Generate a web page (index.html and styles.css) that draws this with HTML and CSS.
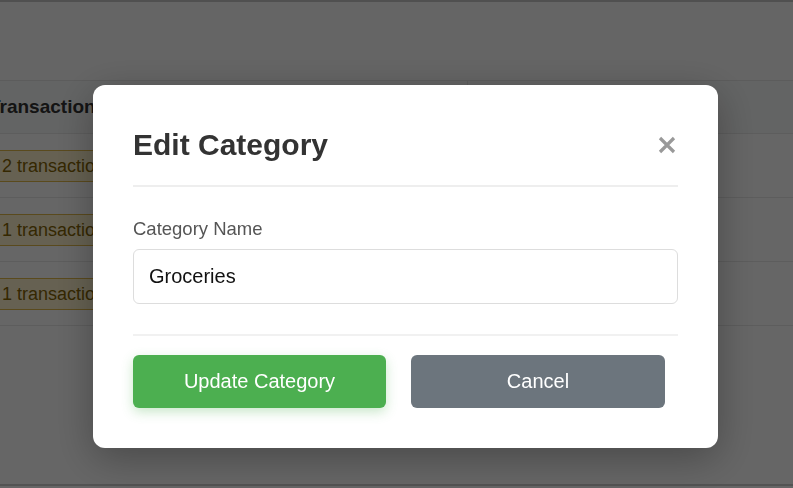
FILE: index.html
```html
<!DOCTYPE html>
<html lang="en">
<head>
<meta charset="utf-8">
<title>Edit Category</title>
<link rel="stylesheet" href="styles.css">
</head>
<body>
<div class="page">
  <div class="topbar"></div>
  <div class="table">
    <div class="row head">
      <div class="cell c1">Transactions</div>
      <div class="cell c2">Actions</div>
    </div>
    <div class="row">
      <div class="cell c1"><span class="badge">2 transactions</span></div>
      <div class="cell c2"></div>
    </div>
    <div class="row">
      <div class="cell c1"><span class="badge">1 transactions</span></div>
      <div class="cell c2"></div>
    </div>
    <div class="row">
      <div class="cell c1"><span class="badge">1 transactions</span></div>
      <div class="cell c2"></div>
    </div>
  </div>
</div>

<div class="overlay">
  <div class="modal">
    <div class="modal-header">
      <h2 class="modal-title">Edit Category</h2>
      <button class="close" aria-label="Close">
        <svg width="18" height="18" viewBox="0 0 18 18"><path d="M2 2 L16 16 M16 2 L2 16" stroke="#999" stroke-width="3.2" stroke-linecap="butt"/></svg>
      </button>
    </div>
    <div class="modal-body">
      <label class="label">Category Name</label>
      <div class="input">Groceries</div>
    </div>
    <div class="modal-footer">
      <button class="btn btn-primary">Update Category</button>
      <button class="btn btn-secondary">Cancel</button>
    </div>
  </div>
</div>
</body>
</html>
```

FILE: styles.css
```css
* { box-sizing: border-box; }
html, body { margin: 0; padding: 0; }
body {
  font-family: "Liberation Sans", Arial, sans-serif;
  width: 793px;
  height: 488px;
  overflow: hidden;
  background: #ffffff;
}
.page {
  height: 486px;
  border-top: 2px solid #c8c8c8;
  border-bottom: 2px solid #cfcfcf;
  overflow: hidden;
}
.topbar { height: 78px; background: #fdfdfd; }
.table {
  margin-left: -26px;
  width: 860px;
  border-top: 1px solid #e6e6e6;
}
.row {
  display: flex;
  height: 64px;
  border-bottom: 1px solid #e8e8e8;
  align-items: center;
}
.row.head { height: 53px; background: #f8f9fa; }
.cell { padding-left: 15px; height: 100%; display: flex; align-items: center; }
.c1 { width: 494px; }
.head .c1 { border-right: 1px solid #e6e6e6; }
.c2 { flex: 1; }
.head .cell { font-weight: bold; font-size: 19px; color: #333; }
.badge {
  display: inline-block;
  height: 32px;
  line-height: 30px;
  padding: 0 12px;
  background: #fff3cd;
  border: 1px solid #e0b84a;
  border-radius: 4px;
  color: #856404;
  font-size: 18px;
}

.overlay {
  position: fixed;
  inset: 0;
  background: rgba(0, 0, 0, 0.6);
  padding: 85px 0 0 93px;
}
.modal {
  width: 625px;
  height: 363px;
  background: #fff;
  border-radius: 12px;
  padding: 40px 40px 40px 40px;
  box-shadow: 0 10px 40px rgba(0, 0, 0, 0.3);
}
.modal-header {
  display: flex;
  justify-content: space-between;
  align-items: center;
  height: 62px;
  padding-bottom: 21px;
  border-bottom: 2px solid #eeeeee;
}
.modal-title {
  margin: 0;
  font-size: 30px;
  line-height: 40px;
  font-weight: bold;
  color: #333;
}
.close {
  border: 0;
  background: none;
  padding: 0;
  margin: 0 2px 0 0;
  width: 18px;
  height: 18px;
  display: flex;
  cursor: pointer;
}
.modal-body { padding-top: 31px; }
.label {
  display: block;
  font-size: 18.5px;
  line-height: 21px;
  color: #555;
  margin-bottom: 10px;
}
.input {
  height: 55px;
  border: 1px solid #dddddd;
  border-radius: 6px;
  padding: 0 15px;
  display: flex;
  align-items: center;
  font-size: 20px;
  color: #111;
}
.modal-footer {
  margin-top: 30px;
  border-top: 2px solid #f1f1f1;
  padding-top: 19px;
  display: flex;
  gap: 25px;
}
.btn {
  width: 253px;
  height: 53px;
  border: 0;
  border-radius: 6px;
  color: #fff;
  font-family: "Liberation Sans", Arial, sans-serif;
  font-size: 20px;
  cursor: pointer;
}
.btn-primary {
  background: #4caf50;
  box-shadow: 0 4px 12px rgba(76, 175, 80, 0.3);
}
.btn-secondary {
  width: 254px;
  background: #6c757d;
}
```
